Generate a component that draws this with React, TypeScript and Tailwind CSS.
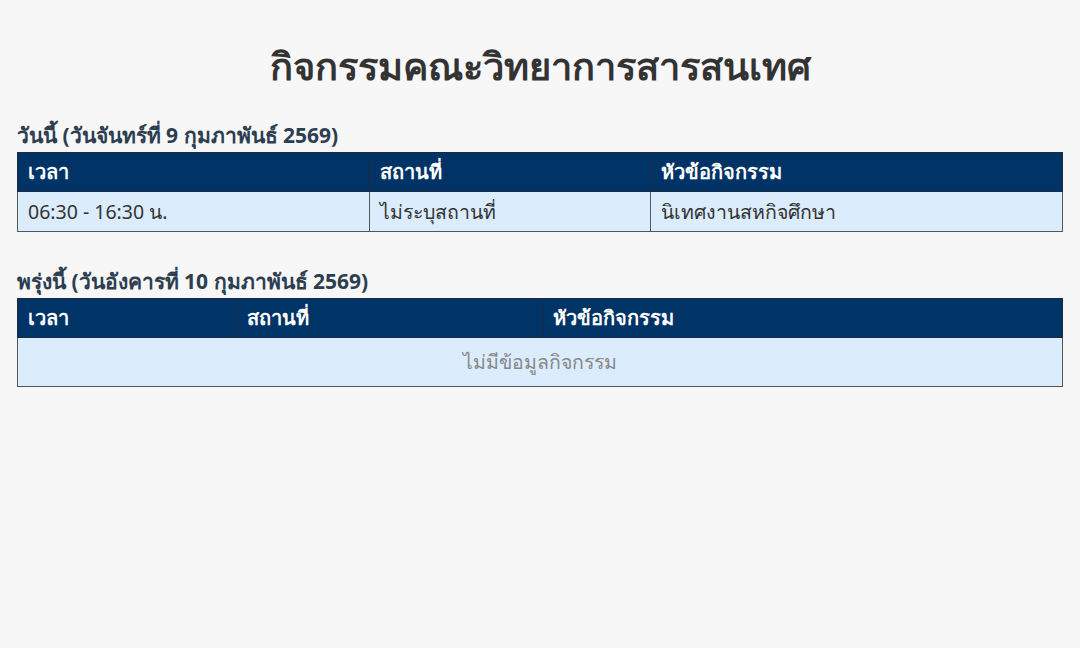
const font = { fontFamily: '"Noto Sans", "Open Sans", sans-serif' };

type Row = { time: string; place: string; title: string };

const DAYS: { heading: string; cols: string[]; rows: Row[] }[] = [
  {
    heading: "วันนี้ (วันจันทร์ที่ 9 กุมภาพันธ์ 2569)",
    cols: ["33.7%", "26.9%", "39.4%"],
    rows: [
      { time: "06:30 - 16:30 น.", place: "ไม่ระบุสถานที่", title: "นิเทศงานสหกิจศึกษา" },
    ],
  },
  {
    heading: "พรุ่งนี้ (วันอังคารที่ 10 กุมภาพันธ์ 2569)",
    cols: ["21%", "29.2%", "49.8%"],
    rows: [],
  },
];

function DayTable({ heading, cols, rows }: { heading: string; cols: string[]; rows: Row[] }) {
  return (
    <section className="mb-[37px]">
      <h2 className="mb-[5px] text-[21px] font-bold leading-[24px] text-[#2c3e50]">{heading}</h2>
      <table className="w-full table-fixed border-collapse border border-[#555] text-[19.5px]">
        <colgroup>
          {cols.map((w, i) => (
            <col key={i} style={{ width: w }} />
          ))}
        </colgroup>
        <thead>
          <tr className="bg-[#003366] text-left text-[20px] text-white">
            <th className="h-[39px] border border-[#1a2a44] px-[10px] font-bold">เวลา</th>
            <th className="h-[39px] border border-[#1a2a44] px-[10px] font-bold">สถานที่</th>
            <th className="h-[39px] border border-[#1a2a44] px-[10px] font-bold">หัวข้อกิจกรรม</th>
          </tr>
        </thead>
        <tbody>
          {rows.length === 0 ? (
            <tr className="bg-[#dbecfd]">
              <td colSpan={3} className="h-[49px] border border-[#555] text-center text-[#888]">
                ไม่มีข้อมูลกิจกรรม
              </td>
            </tr>
          ) : (
            rows.map((r, i) => (
              <tr key={i} className="bg-[#dbecfd] text-[#333]">
                <td className="h-[40px] border border-[#555] px-[10px]">{r.time}</td>
                <td className="h-[40px] border border-[#555] px-[10px]">{r.place}</td>
                <td className="h-[40px] border border-[#555] px-[10px]">{r.title}</td>
              </tr>
            ))
          )}
        </tbody>
      </table>
    </section>
  );
}

export default function App() {
  return (
    <div className="min-h-[648px] bg-[#f7f7f7] px-[17px] pt-[42px]" style={font}>
      <h1 className="mb-[35px] text-center text-[38px] font-bold leading-[46px] text-[#333]">
        กิจกรรมคณะวิทยาการสารสนเทศ
      </h1>
      {DAYS.map((d) => (
        <DayTable key={d.heading} heading={d.heading} cols={d.cols} rows={d.rows} />
      ))}
    </div>
  );
}
